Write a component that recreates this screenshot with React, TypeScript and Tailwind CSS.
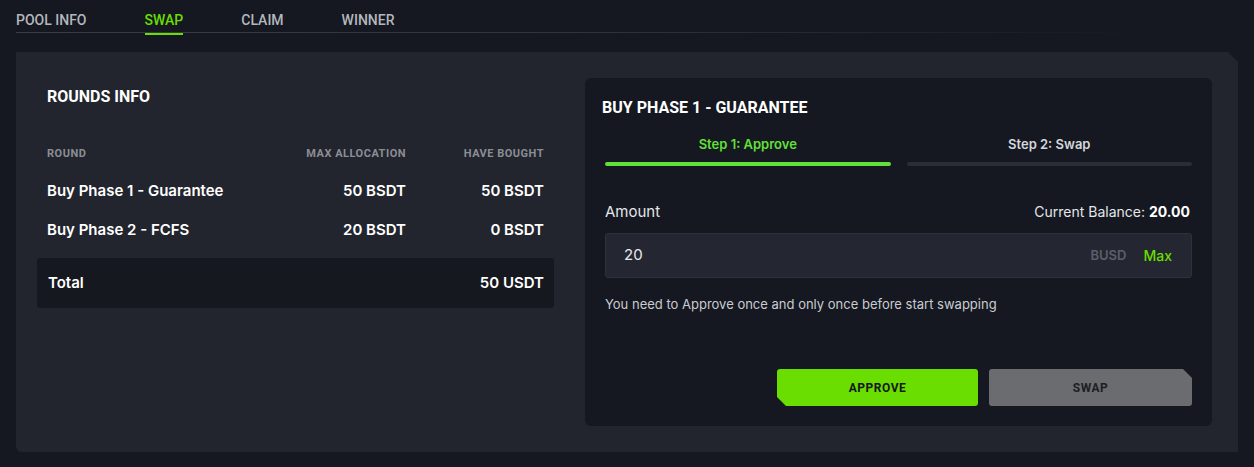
const head = { fontFamily: 'Roboto, "Liberation Sans", sans-serif' };
const body = { fontFamily: 'Inter, "Noto Sans", sans-serif' };

const tabs = ["POOL INFO", "SWAP", "CLAIM", "WINNER"];

const rounds = [
  { name: "Buy Phase 1 - Guarantee", max: "50 BSDT", bought: "50 BSDT" },
  { name: "Buy Phase 2 - FCFS", max: "20 BSDT", bought: "0 BSDT" },
];

export default function App() {
  return (
    <div className="min-h-[467px] w-[1254px] bg-[#151820] pt-[11px] text-white" style={body}>
      {/* tabs */}
      <div className="relative mx-4 flex h-[21px] gap-[58px]" style={head}>
        {tabs.map((t) => (
          <div
            key={t}
            className={`relative text-[14px] font-medium leading-[18px] ${t === "SWAP" ? "text-[#6ade00]" : "text-[#b4b7bd]"}`}
          >
            {t}
            {t === "SWAP" && <div className="absolute -bottom-[3px] left-0 right-0 z-10 h-[2px] bg-[#6ade00]" />}
          </div>
        ))}
        <div className="absolute -bottom-[1px] left-0 h-px w-[1130px] bg-gradient-to-r from-[#3a3d45] via-[#30333b] to-transparent" />
      </div>

      {/* main panel */}
      <div className="mx-4 mt-[20px] flex h-[400px] gap-[31px] rounded-bl-md bg-[#22252e] py-[26px] pl-[21px] pr-[26px] [clip-path:polygon(0_0,calc(100%-10px)_0,100%_10px,100%_100%,0_100%)]">
        {/* left */}
        <div className="w-[517px]">
          <div className="px-[10px] pt-[10px] text-[16px] font-bold leading-[18px]" style={head}>
            ROUNDS INFO
          </div>
          <div className="mt-[41px] flex px-[10px] text-[11px] font-bold leading-[14px] tracking-[0.5px] text-[#8b8e95]" style={head}>
            <div className="flex-1">ROUND</div>
            <div className="w-[150px] text-right">MAX ALLOCATION</div>
            <div className="w-[138px] text-right">HAVE BOUGHT</div>
          </div>
          <div className="mt-[11px]">
            {rounds.map((r) => (
              <div key={r.name} className="flex h-[39px] items-center px-[10px] text-[15px] font-semibold">
                <div className="flex-1">{r.name}</div>
                <div className="w-[150px] text-right">{r.max}</div>
                <div className="w-[138px] text-right">{r.bought}</div>
              </div>
            ))}
          </div>
          <div className="mt-[8px] flex h-[50px] items-center justify-between rounded-[3px] bg-[#161820] px-[10px] text-[15px] font-semibold">
            <div className="pl-px">Total</div>
            <div>50 USDT</div>
          </div>
        </div>

        {/* right */}
        <div className="flex flex-1 flex-col rounded-md bg-[#151820] px-[20px] pb-[20px]">
          <div className="-ml-[3px] mt-[21px] text-[16px] font-bold leading-[18px]" style={head}>
            BUY PHASE 1 - GUARANTEE
          </div>
          <div className="mt-[19px] flex gap-[16px]">
            <div className="flex-1">
              <div className="text-center text-[13px] font-semibold leading-[16px] text-[#62e03a]">Step 1: Approve</div>
              <div className="mt-[10px] h-[4px] rounded-full bg-[#62e03a]" />
            </div>
            <div className="flex-1">
              <div className="text-center text-[13px] font-semibold leading-[16px] text-[#d4d7dc]">Step 2: Swap</div>
              <div className="mt-[10px] h-[4px] rounded-full bg-[#2a2d36]" />
            </div>
          </div>
          <div className="mt-[37px] flex items-center justify-between text-[15px] leading-[18px]">
            <div className="text-[#e4e6ea]">Amount</div>
            <div className="pr-[2px] text-[14px] text-[#e4e6ea]">
              Current Balance: <span className="font-bold text-white">20.00</span>
            </div>
          </div>
          <div className="mt-[12px] flex h-[45px] items-center rounded-[3px] border border-[#2e313a] bg-[#242731] px-[18px]">
            <div className="flex-1 text-[15px] text-[#e8eaee]">20</div>
            <div className="text-[13px] font-semibold text-[#5c5f68]">BUSD</div>
            <div className="ml-[17px] mr-px text-[14px] font-medium text-[#6ade00]">Max</div>
          </div>
          <div className="mt-[18px] text-[13px] leading-[16px] text-[#c9ccd1]">
            You need to Approve once and only once before start swapping
          </div>
          <div className="mt-auto flex justify-end gap-[11px]">
            <button
              className="flex h-[37px] w-[201px] items-center justify-center rounded-[3px] bg-[#6ade00] text-[12px] font-bold tracking-[0.5px] text-[#15171c] [clip-path:polygon(0_0,100%_0,100%_100%,9px_100%,0_calc(100%-9px))]"
              style={head}
            >
              APPROVE
            </button>
            <button
              className="flex h-[37px] w-[203px] items-center justify-center rounded-[3px] bg-[#6b6c70] text-[12px] font-bold tracking-[0.5px] text-[#1d1e22] [clip-path:polygon(0_0,calc(100%-9px)_0,100%_9px,100%_100%,0_100%)]"
              style={head}
            >
              SWAP
            </button>
          </div>
        </div>
      </div>
    </div>
  );
}
